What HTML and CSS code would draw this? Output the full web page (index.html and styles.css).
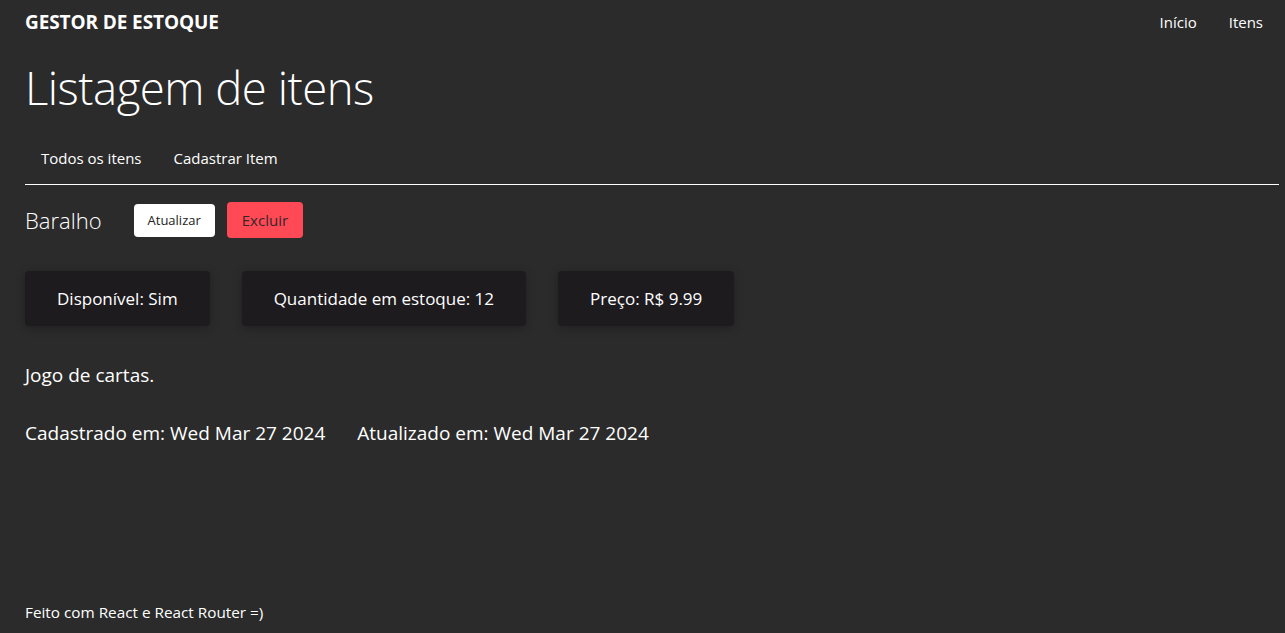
FILE: index.html
```html
<!DOCTYPE html>
<html lang="pt-BR">
<head>
<meta charset="utf-8">
<title>Gestor de Estoque</title>
<link rel="stylesheet" href="styles.css">
</head>
<body>
<div class="app">
  <header class="topbar">
    <span class="brand">GESTOR DE ESTOQUE</span>
    <nav class="topnav">
      <a href="#">Início</a>
      <a href="#">Itens</a>
    </nav>
  </header>
  <main class="main">
    <h1 class="title">Listagem de itens</h1>
    <div class="tabs">
      <a href="#" class="tab">Todos os itens</a>
      <a href="#" class="tab">Cadastrar Item</a>
    </div>
    <div class="item-head">
      <h2 class="item-name">Baralho</h2>
      <button class="btn btn-light">Atualizar</button>
      <button class="btn btn-danger">Excluir</button>
    </div>
    <div class="cards">
      <div class="card">Disponível: Sim</div>
      <div class="card">Quantidade em estoque: 12</div>
      <div class="card">Preço: R$ 9.99</div>
    </div>
    <p class="desc">Jogo de cartas.</p>
    <div class="dates">
      <span>Cadastrado em: Wed Mar 27 2024</span>
      <span>Atualizado em: Wed Mar 27 2024</span>
    </div>
  </main>
  <footer class="footer">Feito com React e React Router =)</footer>
</div>
</body>
</html>
```
FILE: styles.css
```css
* { box-sizing: border-box; }
html, body { margin: 0; padding: 0; height: 100%; }
body {
  background: #2b2b2b;
  color: #ffffff;
  font-family: "Open Sans", "Noto Sans", sans-serif;
}
.app {
  min-height: 633px;
  display: flex;
  flex-direction: column;
  padding: 0 6px 0 25px;
}
.topbar {
  display: flex;
  justify-content: space-between;
  align-items: center;
  height: 44px;
  padding-right: 16px;
}
.brand {
  font-weight: 700;
  font-size: 19px;
  letter-spacing: -0.1px;
}
.topnav { display: flex; gap: 32px; }
.topnav a {
  color: #fff;
  text-decoration: none;
  font-size: 15px;
}
.main { flex: 1; }
.title {
  margin: 11px 0 0;
  font-weight: 300;
  font-size: 45.5px;
  line-height: 64px;
  letter-spacing: -0.5px;
}
.tabs {
  display: flex;
  margin-top: 26px;
  border-bottom: 1px solid #ffffff;
  height: 40px;
  align-items: center;
}
.tab {
  color: #fff;
  text-decoration: none;
  font-size: 15px;
  padding: 0 16px;
  margin-top: -13px;
}
.item-head {
  display: flex;
  align-items: center;
  margin-top: 17px;
}
.item-name {
  margin: 0 32px 0 0;
  font-weight: 300;
  font-size: 22px;
}
.btn {
  font-family: inherit;
  border: none;
  border-radius: 4px;
  cursor: pointer;
}
.btn-light {
  background: #ffffff;
  color: #222;
  font-size: 13px;
  height: 33px;
  padding: 0 14px;
  margin-right: 12px;
}
.btn-danger {
  background: #ff4a55;
  color: #33262a;
  font-size: 15px;
  height: 36px;
  padding: 0 15px;
}
.cards {
  display: flex;
  gap: 32px;
  margin-top: 33px;
}
.card {
  background: #1d1b1e;
  border-radius: 4px;
  height: 55px;
  padding: 0 32px;
  display: flex;
  align-items: center;
  font-size: 17px;
  box-shadow: 0 2px 10px rgba(0,0,0,0.25);
}
.desc {
  margin: 36px 0 0;
  font-size: 19px;
}
.dates {
  display: flex;
  gap: 32px;
  margin-top: 32px;
  font-size: 19px;
}
.footer {
  font-size: 15.3px;
  height: 43px;
  display: flex;
  align-items: center;
}
```
